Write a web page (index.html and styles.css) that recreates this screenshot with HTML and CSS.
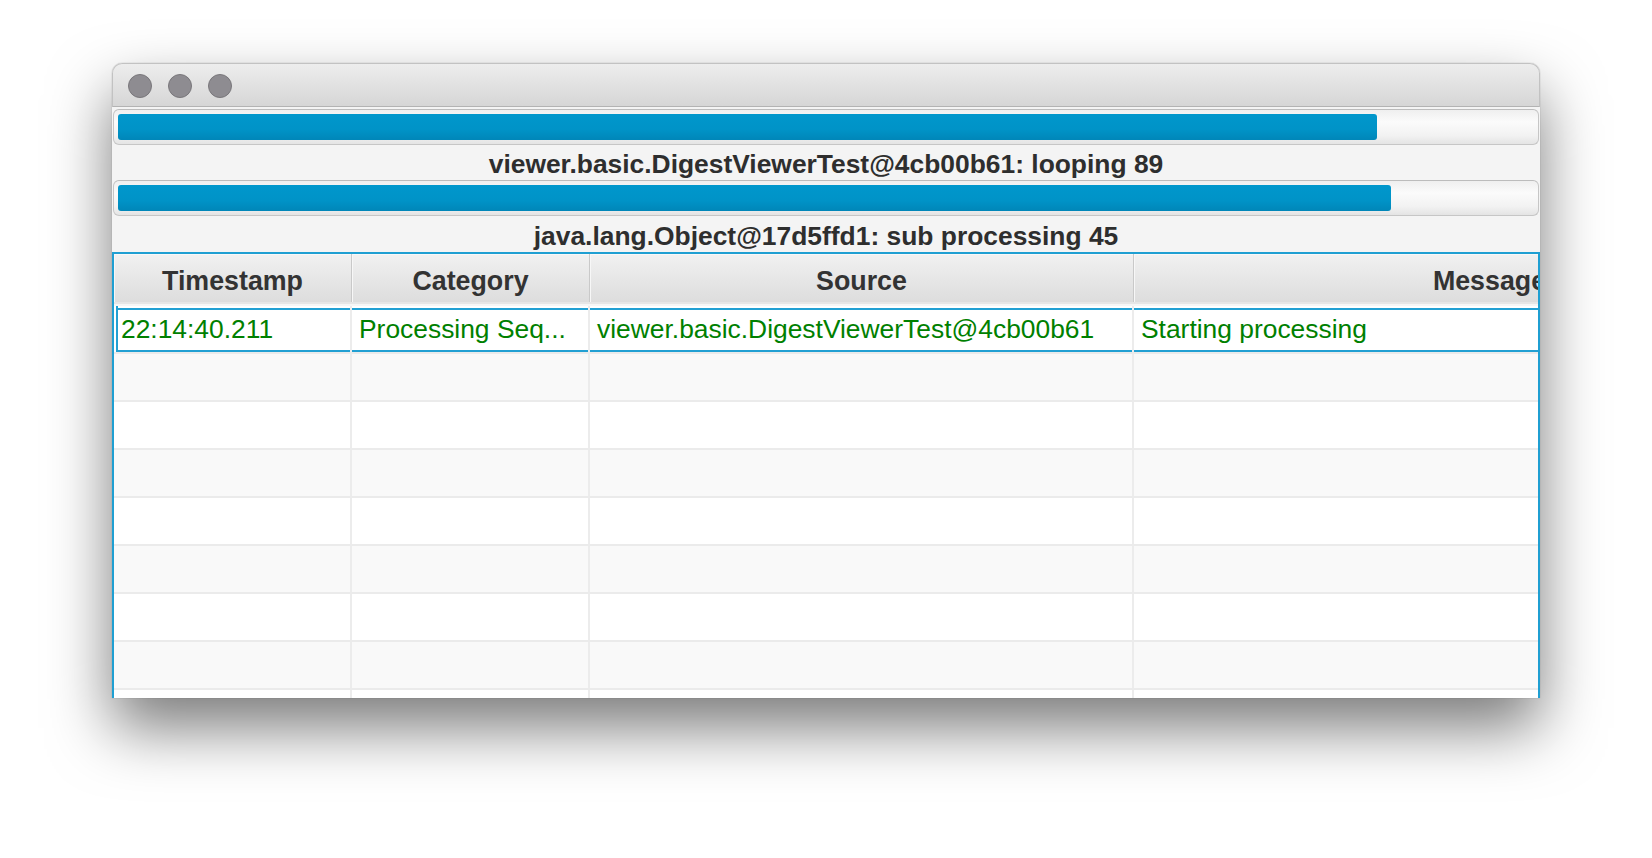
FILE: index.html
```html
<!DOCTYPE html>
<html>
<head>
<meta charset="utf-8">
<link rel="stylesheet" href="styles.css">
</head>
<body>
<div class="window">
  <div class="titlebar">
    <span class="light"></span><span class="light"></span><span class="light"></span>
  </div>
  <div class="content">
    <div class="track"><div class="bar" style="width:88.9%"></div></div>
    <div class="label">viewer.basic.DigestViewerTest@4cb00b61: looping 89</div>
    <div class="track"><div class="bar" style="width:89.9%"></div></div>
    <div class="label label2">java.lang.Object@17d5ffd1: sub processing 45</div>
    <div class="table">
      <div class="thead">
        <div class="th c1">Timestamp</div>
        <div class="th c2">Category</div>
        <div class="th c3">Source</div>
        <div class="th c4">Message</div>
      </div>
      <div class="row focused">
        <div class="td c1">22:14:40.211</div>
        <div class="td c2">Processing Seq...</div>
        <div class="td c3">viewer.basic.DigestViewerTest@4cb00b61</div>
        <div class="td c4">Starting processing</div>
      </div>
      <div class="row odd"><div class="td c1"></div><div class="td c2"></div><div class="td c3"></div><div class="td c4"></div></div>
      <div class="row"><div class="td c1"></div><div class="td c2"></div><div class="td c3"></div><div class="td c4"></div></div>
      <div class="row odd"><div class="td c1"></div><div class="td c2"></div><div class="td c3"></div><div class="td c4"></div></div>
      <div class="row"><div class="td c1"></div><div class="td c2"></div><div class="td c3"></div><div class="td c4"></div></div>
      <div class="row odd"><div class="td c1"></div><div class="td c2"></div><div class="td c3"></div><div class="td c4"></div></div>
      <div class="row"><div class="td c1"></div><div class="td c2"></div><div class="td c3"></div><div class="td c4"></div></div>
      <div class="row odd"><div class="td c1"></div><div class="td c2"></div><div class="td c3"></div><div class="td c4"></div></div>
      <div class="row"><div class="td c1"></div><div class="td c2"></div><div class="td c3"></div><div class="td c4"></div></div>
    </div>
  </div>
</div>
</body>
</html>
```

FILE: styles.css
```css
html, body {
  margin: 0;
  padding: 0;
}
body {
  width: 1652px;
  height: 858px;
  overflow: hidden;
  background: #ffffff;
  font-family: "Liberation Sans", Arial, sans-serif;
}
.window {
  margin: 63px 0 0 112px;
  width: 1428px;
  height: 635px;
  border-radius: 10px 10px 0 0;
  overflow: hidden;
  background: #f4f4f4;
  box-shadow: 0 30px 62px rgba(0, 0, 0, 0.52), 0 0 1px rgba(0, 0, 0, 0.45);
  display: flex;
  flex-direction: column;
}
.titlebar {
  box-sizing: border-box;
  height: 44px;
  flex-shrink: 0;
  border: 1px solid #c2c2c2;
  border-bottom-color: #b3b3b3;
  border-radius: 10px 10px 0 0;
  background: linear-gradient(#ededed, #d6d6d6);
  display: flex;
  align-items: center;
  gap: 16px;
  padding-left: 15px;
  padding-top: 1px;
}
.light {
  width: 24px;
  height: 24px;
  box-sizing: border-box;
  border-radius: 50%;
  background: #8e8c91;
  border: 1px solid #79777b;
}
.content {
  flex: 1;
  display: flex;
  flex-direction: column;
  padding-top: 2px;
  min-height: 0;
}
.track {
  box-sizing: border-box;
  height: 36px;
  margin: 0 1px;
  padding: 4px;
  border: 1px solid #c6c6c6;
  border-top-color: #bcbcbc;
  border-radius: 6px;
  background: linear-gradient(#efefef, #fbfbfb 35%, #f2f2f2 75%, #e4e4e4);
  flex-shrink: 0;
}
.bar {
  height: 26px;
  border-radius: 3px;
  background: linear-gradient(#0097cc, #0093c7 60%, #0086b8);
}
.label {
  height: 35px;
  line-height: 39px;
  text-align: center;
  font-weight: bold;
  font-size: 26.4px;
  color: #2e2e2e;
  flex-shrink: 0;
  white-space: nowrap;
}
.label2 {
  height: 36px;
  line-height: 40px;
}
.table {
  box-sizing: border-box;
  border: 2px solid #1f9fd2;
  border-bottom: none;
  flex: 1;
  min-height: 0;
  overflow: hidden;
  background: #ffffff;
}
.thead {
  display: flex;
  height: 50px;
  box-shadow: inset 0 -2px 0 #e6e6e6;
  background: linear-gradient(#f1f1f1, #dcdcdc);
}
.th {
  box-sizing: border-box;
  flex-shrink: 0;
  height: 48px;
  border-right: 1px solid #c9c9c9;
  box-shadow: inset 1px 0 0 #f7f7f7, inset 0 1px 0 #f8f8f8;
  text-align: center;
  font-weight: bold;
  font-size: 26.8px;
  line-height: 54px;
  color: #333333;
  white-space: nowrap;
}
.c1 { width: 238px; }
.c2 { width: 238px; }
.c3 { width: 544px; }
.c4 { width: 712px; }
.row {
  display: flex;
  box-sizing: border-box;
  height: 48px;
  border-top: 2px solid #ebebeb;
  background: #ffffff;
}
.row.odd {
  background: #f9f9f9;
}
.row.focused {
  border-top-color: #f6f6f6;
}
.td {
  box-sizing: border-box;
  flex-shrink: 0;
  height: 46px;
  border-right: 2px solid #ececec;
  padding-left: 7px;
  font-size: 26.4px;
  line-height: 46px;
  color: #008000;
  white-space: nowrap;
  overflow: hidden;
}
.focused .td {
  box-shadow: inset 0 2px 0 #ffffff, inset 0 4px 0 #22a0d3, inset 0 -2px 0 #22a0d3;
  line-height: 47px;
}
.focused .td.c1 {
  box-shadow: inset 2px 0 0 #ffffff, inset 4px 0 0 #22a0d3, inset 0 2px 0 #ffffff, inset 0 4px 0 #22a0d3, inset 0 -2px 0 #22a0d3;
}
```
